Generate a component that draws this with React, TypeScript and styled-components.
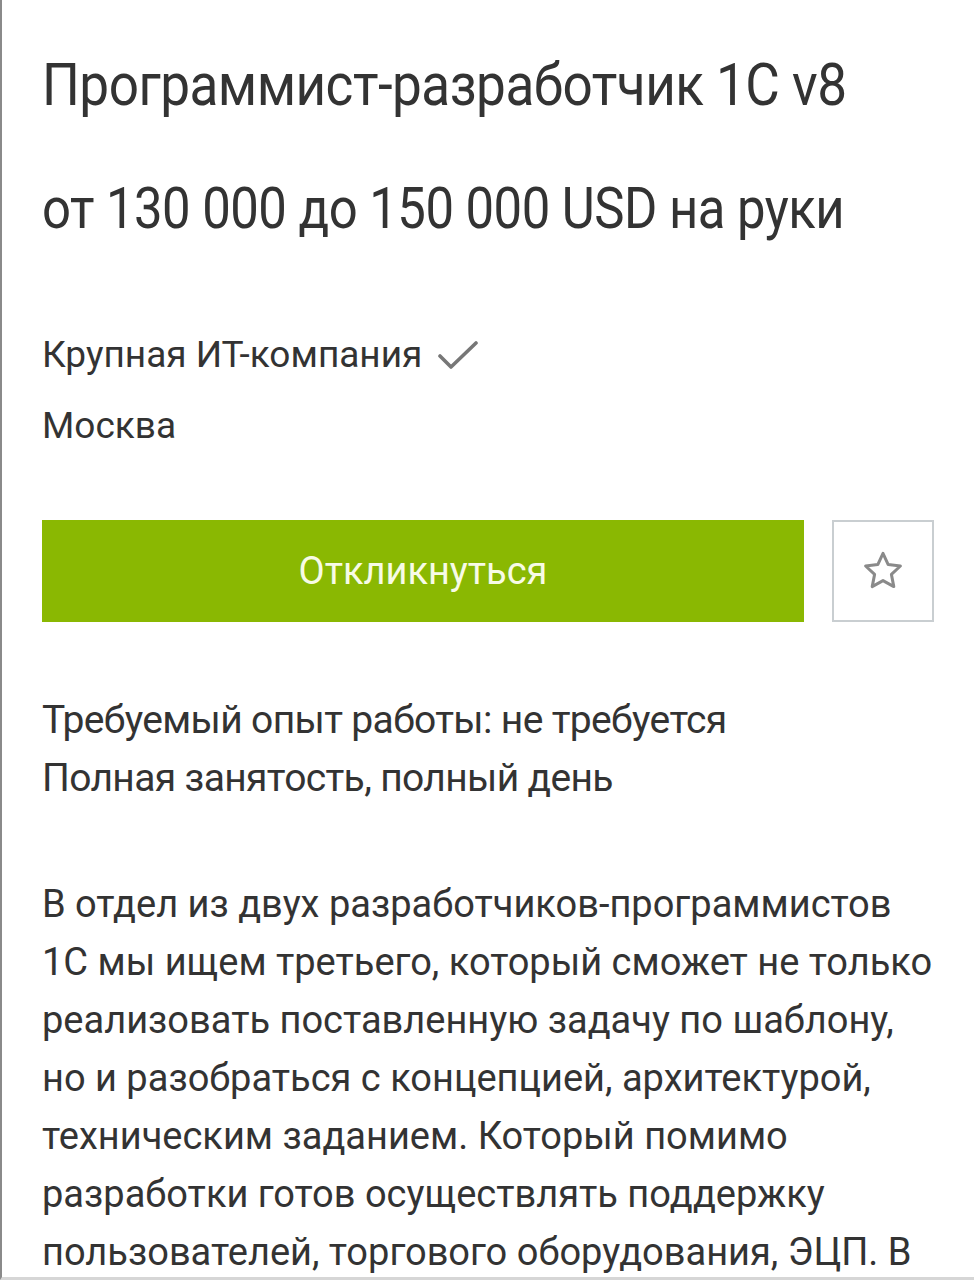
import React from "react";
import styled, { createGlobalStyle } from "styled-components";

const Global = createGlobalStyle`
  html, body { margin: 0; padding: 0; background: #ffffff; }
  body { font-family: Roboto, "Noto Sans", sans-serif; color: #333333; }
`;

const Frame = styled.div`
  box-sizing: border-box;
  width: 974px;
  height: 1280px;
  overflow: hidden;
  border-left: 2px solid #8a8a8a;
  border-bottom: 3px solid #d6d6d6;
  padding: 0 0 0 40px;
  background: #fff;
`;

const Title = styled.h1`
  margin: 49px 0 0;
  font-family: Roboto, sans-serif;
  font-weight: 400;
  font-size: 60px;
  line-height: 72px;
  letter-spacing: -0.6px;
  color: #333;
  white-space: nowrap;
  transform: scaleX(0.885);
  transform-origin: left center;
`;

const Salary = styled.div`
  margin-top: 52px;
  font-size: 58px;
  line-height: 70px;
  letter-spacing: -0.6px;
  color: #333;
  white-space: nowrap;
  transform: scaleX(0.877);
  transform-origin: left center;
`;

const CompanyBlock = styled.div`
  margin-top: 76px;
  font-size: 37px;
  line-height: 71px;
  color: #333;
`;

const CompanyRow = styled.div`
  display: flex;
  align-items: center;
  gap: 16px;
`;

const Actions = styled.div`
  margin-top: 59px;
  display: flex;
  gap: 28px;
  height: 102px;
`;

const ApplyButton = styled.button`
  width: 762px;
  height: 102px;
  border: none;
  background: #8ab802;
  color: #f7fbe6;
  font-family: Roboto, sans-serif;
  font-size: 38px;
  cursor: pointer;
  padding: 0;
`;

const StarButton = styled.button`
  box-sizing: border-box;
  width: 102px;
  height: 102px;
  border: 2px solid #c9ced1;
  background: #fff;
  display: flex;
  align-items: center;
  justify-content: center;
  padding: 0;
`;

const Meta = styled.div`
  margin-top: 69px;
  font-size: 39px;
  line-height: 58px;
  letter-spacing: -0.65px;
  color: #333;
`;

const Body = styled.div`
  margin-top: 68px;
  font-size: 38px;
  line-height: 58px;
  color: #333;
  white-space: nowrap;
`;

const lines = [
  "В отдел из двух разработчиков-программистов",
  "1С мы ищем третьего, который сможет не только",
  "реализовать поставленную задачу по шаблону,",
  "но и разобраться с концепцией, архитектурой,",
  "техническим заданием. Который помимо",
  "разработки готов осуществлять поддержку",
  "пользователей, торгового оборудования, ЭЦП. В",
];

export default function App() {
  return (
    <>
      <Global />
      <Frame>
        <Title>Программист-разработчик 1С v8</Title>
        <Salary>от 130 000 до 150 000 USD на руки</Salary>
        <CompanyBlock>
          <CompanyRow>
            <span>Крупная ИТ-компания</span>
            <svg width="40" height="32" viewBox="0 0 40 32" fill="none">
              <polyline points="2,17 13,28 38,4" stroke="#777" strokeWidth="3.6" strokeLinecap="round" strokeLinejoin="round" />
            </svg>
          </CompanyRow>
          <div>Москва</div>
        </CompanyBlock>
        <Actions>
          <ApplyButton>Откликнуться</ApplyButton>
          <StarButton aria-label="В избранное">
            <svg width="48" height="48" viewBox="0 0 24 24" fill="none" stroke="#8a8a8a" strokeWidth="1.5" strokeLinejoin="round">
              <path d="M12 3.2l2.6 5.6 6.1.7-4.5 4.2 1.2 6.1L12 16.8l-5.4 3 1.2-6.1-4.5-4.2 6.1-.7z" />
            </svg>
          </StarButton>
        </Actions>
        <Meta>
          <div>Требуемый опыт работы: не требуется</div>
          <div>Полная занятость, полный день</div>
        </Meta>
        <Body>
          {lines.map((l, i) => (
            <div key={i}>{l}</div>
          ))}
        </Body>
      </Frame>
    </>
  );
}
